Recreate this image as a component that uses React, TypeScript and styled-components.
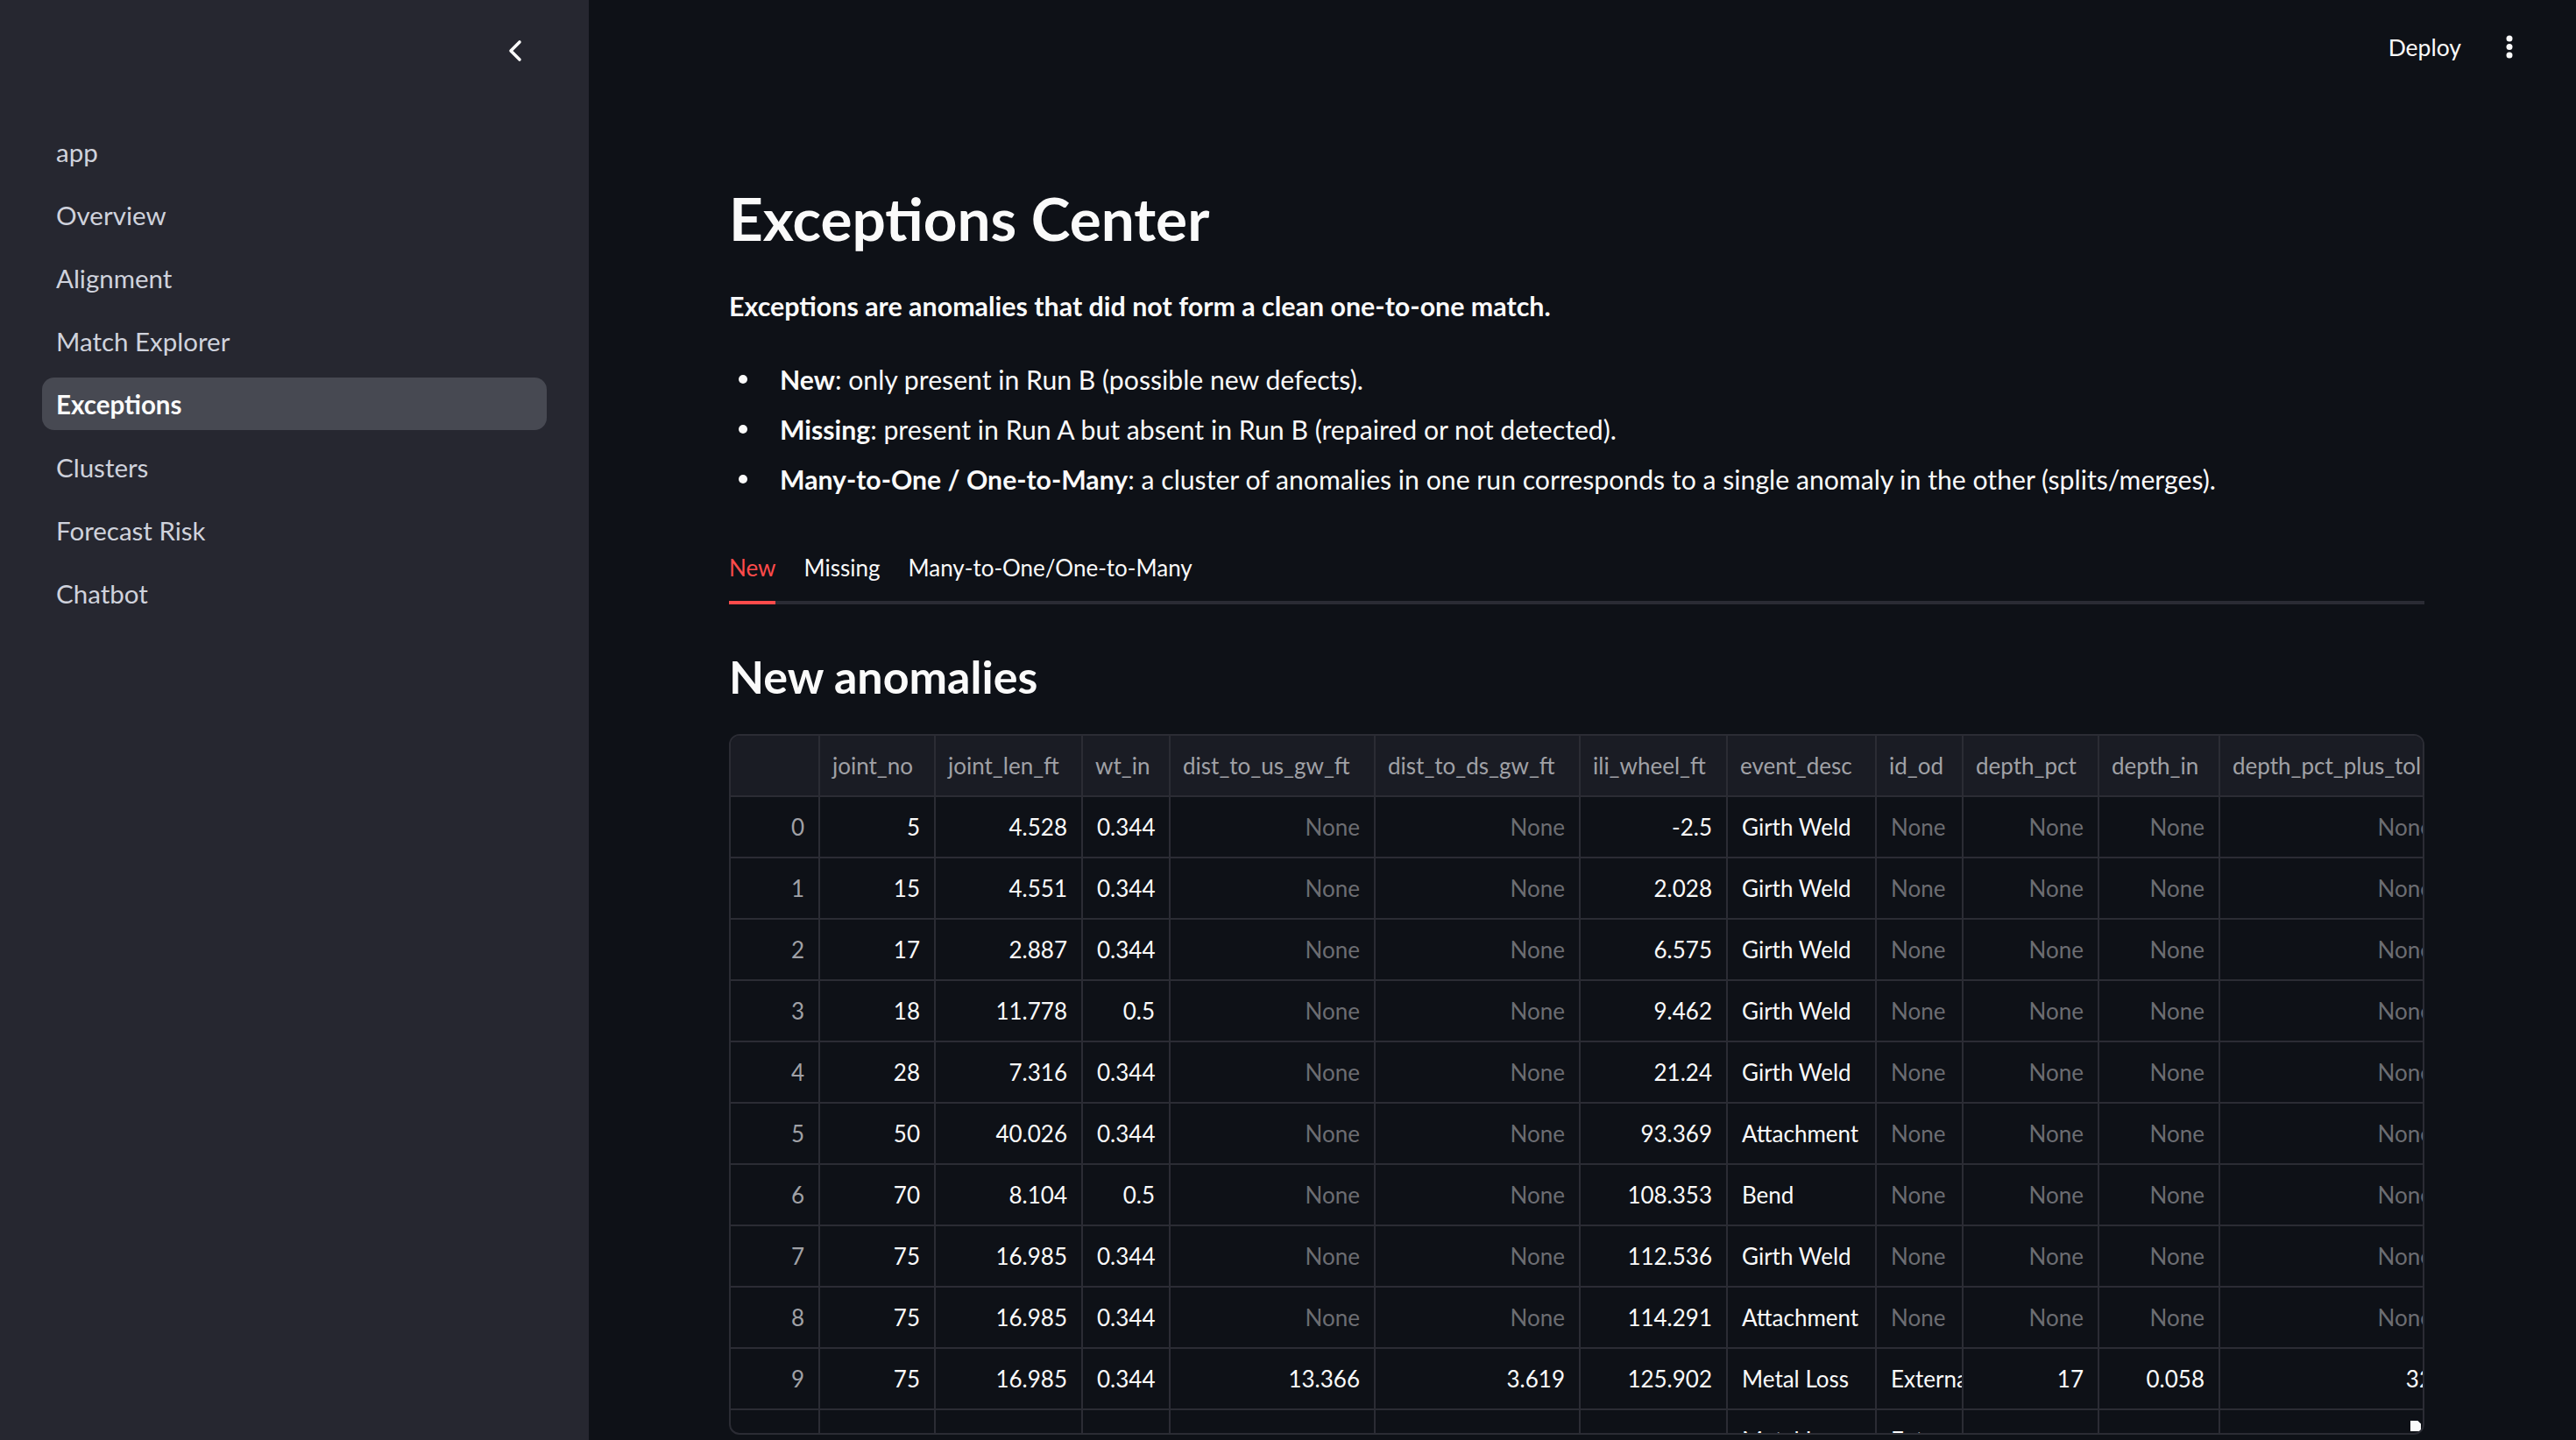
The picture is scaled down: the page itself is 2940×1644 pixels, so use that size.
import styled, { createGlobalStyle } from 'styled-components';

const GlobalStyle = createGlobalStyle`
  html, body {
    margin: 0;
    padding: 0;
    background: #0e1117;
    color: #fafafa;
    font-family: Lato, "Liberation Sans", sans-serif;
  }
  * {
    box-sizing: border-box;
  }
`;

const Shell = styled.div`
  display: flex;
  width: 100vw;
  height: 100vh;
  overflow: hidden;
`;

// 사이드바
const Sidebar = styled.aside`
  flex: 0 0 672px;
  background: #262730;
  display: flex;
  flex-direction: column;
  padding: 0 48px;
`;
const SidebarTop = styled.div`
  height: 108px;
  display: flex;
  align-items: center;
  justify-content: flex-end;
  padding: 8px 26px 0 0;
`;
const Nav = styled.nav`
  display: flex;
  flex-direction: column;
  gap: 12px;
  margin-top: 35px;
`;
const NavLink = styled.a<{ $active?: boolean }>`
  height: 60px;
  display: flex;
  align-items: center;
  padding: 0 16px;
  border-radius: 14px;
  font-size: 29.5px;
  font-weight: ${(p) => (p.$active ? 700 : 400)};
  color: ${(p) => (p.$active ? '#fafafa' : '#cfd2dc')};
  background: ${(p) => (p.$active ? '#474952' : 'transparent')};
  text-decoration: none;
`;

// 메인 영역
const Main = styled.main`
  flex: 1;
  display: flex;
  flex-direction: column;
  min-width: 0;
`;
const Header = styled.header`
  height: 108px;
  flex: 0 0 108px;
  display: flex;
  align-items: center;
  justify-content: flex-end;
  gap: 51px;
  padding-right: 72px;
`;
const DeployText = styled.span`
  font-size: 26.5px;
  color: #fafafa;
`;
const Content = styled.div`
  padding: 0 173px 0 160px;
  display: flex;
  flex-direction: column;
`;
const Title = styled.h1`
  margin: 101px 0 0;
  font-size: 67.5px;
  line-height: 80px;
  font-weight: 700;
  color: #fafafa;
`;
const Lead = styled.p`
  margin: 36px 0 0;
  font-size: 30.4px;
  line-height: 48px;
  font-weight: 700;
`;
const BulletList = styled.ul`
  list-style: none;
  margin: 36px 0 0;
  padding: 0;
  display: flex;
  flex-direction: column;
  gap: 9px;
`;
const BulletItem = styled.li`
  display: flex;
  align-items: center;
  height: 48px;
  font-size: 30.2px;
`;
const Dot = styled.span`
  width: 10px;
  height: 10px;
  border-radius: 50%;
  background: #fafafa;
  margin: 0 37px 0 11px;
  flex: 0 0 10px;
`;

const TabList = styled.div`
  margin-top: 37px;
  display: flex;
  gap: 32px;
  height: 82px;
  border-bottom: 4px solid #2a2b34;
`;
const Tab = styled.button<{ $active?: boolean }>`
  all: unset;
  display: flex;
  align-items: center;
  font-family: Lato, "Liberation Sans", sans-serif;
  font-size: 26px;
  color: ${(p) => (p.$active ? '#ff4b4b' : '#fafafa')};
  border-bottom: 4px solid ${(p) => (p.$active ? '#ff4b4b' : 'transparent')};
  margin-bottom: -4px;
  padding-top: 2px;
`;

const SubTitle = styled.h3`
  margin: 48px 0 0;
  font-size: 52px;
  line-height: 68px;
  font-weight: 700;
`;

// 데이터 테이블
const TableFrame = styled.div`
  position: relative;
  margin-top: 32px;
  height: 800px;
  border: 2px solid #2b2c34;
  border-radius: 12px;
  overflow: hidden;
`;
const Grid = styled.table`
  border-collapse: separate;
  border-spacing: 0;
  table-layout: fixed;
  width: 1960px;
  font-size: 26px;
`;
const HeadCell = styled.th`
  height: 70px;
  padding: 0 14px;
  background: #1a1c24;
  color: #a0a1a6;
  font-weight: 400;
  text-align: left;
  white-space: nowrap;
  overflow: hidden;
  border-right: 2px solid #2b2c34;
  border-bottom: 2px solid #2b2c34;
`;
const Cell = styled.td<{ $align: 'left' | 'right'; $muted?: boolean; $index?: boolean }>`
  height: 70px;
  padding: 0 16px;
  text-align: ${(p) => p.$align};
  color: ${(p) => (p.$muted ? '#6c6d72' : p.$index ? '#a0a1a6' : '#fafafa')};
  white-space: nowrap;
  overflow: hidden;
  border-right: 2px solid #2b2c34;
  border-bottom: 2px solid #2b2c34;
`;
const ResizeHandle = styled.div`
  position: absolute;
  right: 2px;
  bottom: 2px;
  width: 12px;
  height: 12px;
  background: #fafafa;
  clip-path: polygon(0 0, 70% 0, 100% 30%, 100% 100%, 0 100%);
`;

type Col = { label: string; width: number; align: 'left' | 'right' };

const columns: Col[] = [
  { label: '', width: 102, align: 'right' },
  { label: 'joint_no', width: 132, align: 'right' },
  { label: 'joint_len_ft', width: 168, align: 'right' },
  { label: 'wt_in', width: 100, align: 'right' },
  { label: 'dist_to_us_gw_ft', width: 234, align: 'right' },
  { label: 'dist_to_ds_gw_ft', width: 234, align: 'right' },
  { label: 'ili_wheel_ft', width: 168, align: 'right' },
  { label: 'event_desc', width: 170, align: 'left' },
  { label: 'id_od', width: 99, align: 'left' },
  { label: 'depth_pct', width: 155, align: 'right' },
  { label: 'depth_in', width: 138, align: 'right' },
  { label: 'depth_pct_plus_tol', width: 260, align: 'right' },
];

const N = 'None';
const rows: string[][] = [
  ['0', '5', '4.528', '0.344', N, N, '-2.5', 'Girth Weld', N, N, N, N],
  ['1', '15', '4.551', '0.344', N, N, '2.028', 'Girth Weld', N, N, N, N],
  ['2', '17', '2.887', '0.344', N, N, '6.575', 'Girth Weld', N, N, N, N],
  ['3', '18', '11.778', '0.5', N, N, '9.462', 'Girth Weld', N, N, N, N],
  ['4', '28', '7.316', '0.344', N, N, '21.24', 'Girth Weld', N, N, N, N],
  ['5', '50', '40.026', '0.344', N, N, '93.369', 'Attachment', N, N, N, N],
  ['6', '70', '8.104', '0.5', N, N, '108.353', 'Bend', N, N, N, N],
  ['7', '75', '16.985', '0.344', N, N, '112.536', 'Girth Weld', N, N, N, N],
  ['8', '75', '16.985', '0.344', N, N, '114.291', 'Attachment', N, N, N, N],
  ['9', '75', '16.985', '0.344', '13.366', '3.619', '125.902', 'Metal Loss', 'External', '17', '0.058', '32'],
  ['', '', '', '', '', '', '', 'Metal Loss', 'External', '', '', ''],
];

const navItems = ['app', 'Overview', 'Alignment', 'Match Explorer', 'Exceptions', 'Clusters', 'Forecast Risk', 'Chatbot'];

function App() {
  return (
    <Shell>
      <GlobalStyle />
      <Sidebar>
        <SidebarTop>
          <svg width="20" height="28" viewBox="0 0 20 28" fill="none">
            <polyline points="15,4 5,14 15,24" stroke="#fafafa" strokeWidth="3.6" strokeLinecap="round" strokeLinejoin="round" />
          </svg>
        </SidebarTop>
        <Nav>
          {navItems.map((item) => (
            <NavLink key={item} $active={item === 'Exceptions'}>
              {item}
            </NavLink>
          ))}
        </Nav>
      </Sidebar>
      <Main>
        <Header>
          <DeployText>Deploy</DeployText>
          <svg width="8" height="28" viewBox="0 0 8 28">
            <circle cx="4" cy="4" r="3.5" fill="#fafafa" />
            <circle cx="4" cy="13.5" r="3.5" fill="#fafafa" />
            <circle cx="4" cy="23" r="3.5" fill="#fafafa" />
          </svg>
        </Header>
        <Content>
          <Title>Exceptions Center</Title>
          <Lead>Exceptions are anomalies that did not form a clean one-to-one match.</Lead>
          <BulletList>
            <BulletItem>
              <Dot />
              <span>
                <b>New</b>: only present in Run B (possible new defects).
              </span>
            </BulletItem>
            <BulletItem>
              <Dot />
              <span>
                <b>Missing</b>: present in Run A but absent in Run B (repaired or not detected).
              </span>
            </BulletItem>
            <BulletItem>
              <Dot />
              <span>
                <b>Many-to-One / One-to-Many</b>: a cluster of anomalies in one run corresponds to a single anomaly in the other (splits/merges).
              </span>
            </BulletItem>
          </BulletList>
          <TabList>
            <Tab $active>New</Tab>
            <Tab>Missing</Tab>
            <Tab>Many-to-One/One-to-Many</Tab>
          </TabList>
          <SubTitle>New anomalies</SubTitle>
          <TableFrame>
            <Grid>
              <colgroup>
                {columns.map((c, i) => (
                  <col key={i} style={{ width: c.width }} />
                ))}
              </colgroup>
              <thead>
                <tr>
                  {columns.map((c, i) => (
                    <HeadCell key={i}>{c.label}</HeadCell>
                  ))}
                </tr>
              </thead>
              <tbody>
                {rows.map((r, ri) => (
                  <tr key={ri}>
                    {r.map((v, ci) => (
                      <Cell key={ci} $align={columns[ci].align} $muted={v === N} $index={ci === 0}>
                        {v}
                      </Cell>
                    ))}
                  </tr>
                ))}
              </tbody>
            </Grid>
            <ResizeHandle />
          </TableFrame>
        </Content>
      </Main>
    </Shell>
  );
}

export default App;
